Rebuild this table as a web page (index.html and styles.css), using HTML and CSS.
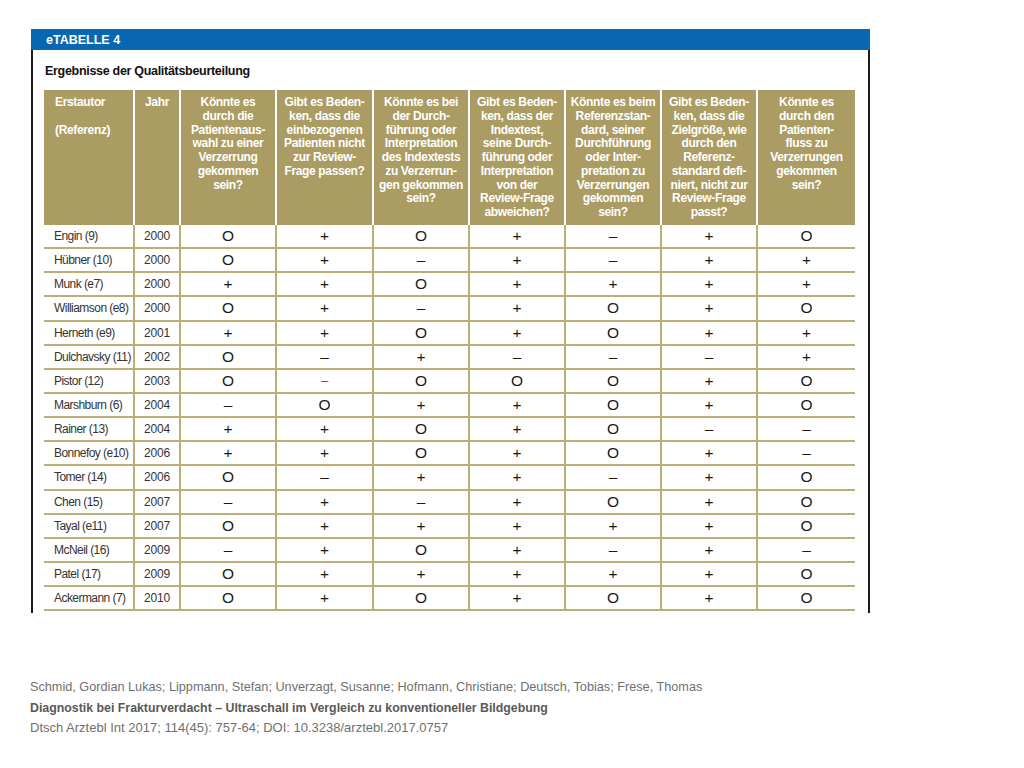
FILE: index.html
```html
<!DOCTYPE html>
<html lang="de">
<head>
<meta charset="utf-8">
<title>eTABELLE 4</title>
<link rel="stylesheet" href="styles.css">
</head>
<body>
<div class="page">
  <div class="frame">
    <div class="titlebar">eTABELLE 4</div>
    <div class="panel">
      <div class="heading">Ergebnisse der Qualitätsbeurteilung</div>
      <table class="qtable">
        <colgroup>
          <col class="c-author"><col class="c-year"><col class="c-q"><col class="c-q2"><col class="c-q"><col class="c-q"><col class="c-q"><col class="c-q"><col class="c-q2">
        </colgroup>
        <thead>
          <tr>
            <th class="h-author">Erstautor<br><br>(Referenz)</th>
            <th>Jahr</th>
            <th>Könnte es<br>durch die<br>Patientenaus-<br>wahl zu einer<br>Verzerrung<br>gekommen<br>sein?</th>
            <th>Gibt es Beden-<br>ken, dass die<br>einbezogenen<br>Patienten nicht<br>zur Review-<br>Frage passen?</th>
            <th>Könnte es bei<br>der Durch-<br>führung oder<br>Interpretation<br>des Indextests<br>zu Verzerrun-<br>gen gekommen<br>sein?</th>
            <th>Gibt es Beden-<br>ken, dass der<br>Indextest,<br>seine Durch-<br>führung oder<br>Interpretation<br>von der<br>Review-Frage<br>abweichen?</th>
            <th>Könnte es beim<br>Referenzstan-<br>dard, seiner<br>Durchführung<br>oder Inter-<br>pretation zu<br>Verzerrungen<br>gekommen<br>sein?</th>
            <th>Gibt es Beden-<br>ken, dass die<br>Zielgröße, wie<br>durch den<br>Referenz-<br>standard defi-<br>niert, nicht zur<br>Review-Frage<br>passt?</th>
            <th>Könnte es<br>durch den<br>Patienten-<br>fluss zu<br>Verzerrungen<br>gekommen<br>sein?</th>
          </tr>
        </thead>
        <tbody>
          <tr><td class="author">Engin (9)</td><td class="year">2000</td><td>O</td><td>+</td><td>O</td><td>+</td><td>–</td><td>+</td><td>O</td></tr>
          <tr><td class="author">Hübner (10)</td><td class="year">2000</td><td>O</td><td>+</td><td>–</td><td>+</td><td>–</td><td>+</td><td>+</td></tr>
          <tr><td class="author">Munk (e7)</td><td class="year">2000</td><td>+</td><td>+</td><td>O</td><td>+</td><td>+</td><td>+</td><td>+</td></tr>
          <tr><td class="author">Williamson (e8)</td><td class="year">2000</td><td>O</td><td>+</td><td>–</td><td>+</td><td>O</td><td>+</td><td>O</td></tr>
          <tr><td class="author">Herneth (e9)</td><td class="year">2001</td><td>+</td><td>+</td><td>O</td><td>+</td><td>O</td><td>+</td><td>+</td></tr>
          <tr><td class="author">Dulchavsky (11)</td><td class="year">2002</td><td>O</td><td>–</td><td>+</td><td>–</td><td>–</td><td>–</td><td>+</td></tr>
          <tr><td class="author">Pistor (12)</td><td class="year">2003</td><td>O</td><td class="thin">–</td><td>O</td><td>O</td><td>O</td><td>+</td><td>O</td></tr>
          <tr><td class="author">Marshburn (6)</td><td class="year">2004</td><td>–</td><td>O</td><td>+</td><td>+</td><td>O</td><td>+</td><td>O</td></tr>
          <tr><td class="author">Rainer (13)</td><td class="year">2004</td><td>+</td><td>+</td><td>O</td><td>+</td><td>O</td><td>–</td><td>–</td></tr>
          <tr><td class="author">Bonnefoy (e10)</td><td class="year">2006</td><td>+</td><td>+</td><td>O</td><td>+</td><td>O</td><td>+</td><td>–</td></tr>
          <tr><td class="author">Tomer (14)</td><td class="year">2006</td><td>O</td><td>–</td><td>+</td><td>+</td><td>–</td><td>+</td><td>O</td></tr>
          <tr><td class="author">Chen (15)</td><td class="year">2007</td><td>–</td><td>+</td><td>–</td><td>+</td><td>O</td><td>+</td><td>O</td></tr>
          <tr><td class="author">Tayal (e11)</td><td class="year">2007</td><td>O</td><td>+</td><td>+</td><td>+</td><td>+</td><td>+</td><td>O</td></tr>
          <tr><td class="author">McNeil (16)</td><td class="year">2009</td><td>–</td><td>+</td><td>O</td><td>+</td><td>–</td><td>+</td><td>–</td></tr>
          <tr><td class="author">Patel (17)</td><td class="year">2009</td><td>O</td><td>+</td><td>+</td><td>+</td><td>+</td><td>+</td><td>O</td></tr>
          <tr><td class="author">Ackermann (7)</td><td class="year">2010</td><td>O</td><td>+</td><td>O</td><td>+</td><td>O</td><td>+</td><td>O</td></tr>
        </tbody>
      </table>
    </div>
  </div>
  <div class="footer">
    <p class="authors">Schmid, Gordian Lukas; Lippmann, Stefan; Unverzagt, Susanne; Hofmann, Christiane; Deutsch, Tobias; Frese, Thomas</p>
    <p class="title">Diagnostik bei Frakturverdacht – Ultraschall im Vergleich zu konventioneller Bildgebung</p>
    <p class="cite">Dtsch Arztebl Int 2017; 114(45): 757-64; DOI: 10.3238/arztebl.2017.0757</p>
  </div>
</div>
</body>
</html>
```

FILE: styles.css
```css
* { box-sizing: border-box; }

html, body {
  margin: 0;
  padding: 0;
  background: #ffffff;
}

body {
  font-family: "Liberation Sans", Arial, sans-serif;
}

.page {
  padding-top: 29px;
}

.frame {
  margin-left: 31px;
  width: 839px;
}

.titlebar {
  height: 21px;
  background: #0966b0;
  color: #ffffff;
  font-weight: bold;
  font-size: 12.5px;
  line-height: 22px;
  padding-left: 15px;
}

.panel {
  border-left: 2px solid #1b1b1b;
  border-right: 2px solid #1b1b1b;
  padding: 0 0 2px 11px;
}

.heading {
  height: 40px;
  display: flex;
  align-items: center;
  padding: 1px 0 0 1px;
  font-weight: bold;
  font-size: 12.5px;
  letter-spacing: -0.3px;
  color: #111111;
}

.qtable {
  border-collapse: separate;
  border-spacing: 0;
  table-layout: fixed;
  width: 811px;
}

.c-author { width: 91px; }
.c-year { width: 46px; }
.c-q { width: 96px; }
.c-q2 { width: 97px; }

.qtable th {
  height: 135px;
  background: #aa9c62;
  color: #ffffff;
  font-weight: bold;
  font-size: 12px;
  letter-spacing: -0.35px;
  line-height: 13.75px;
  text-align: center;
  vertical-align: top;
  white-space: nowrap;
  padding: 6px 0 0;
  border-right: 2px solid #ffffff;
}

.qtable th:last-child { border-right: none; }

.qtable th.h-author {
  text-align: left;
  padding-left: 11px;
}

.qtable tbody tr { height: 24.15px; }

.qtable td {
  padding: 0;
  border-bottom: 2px solid #bcae78;
  border-right: 2px solid #bcae78;
  text-align: center;
  vertical-align: middle;
  font-size: 15.5px;
  line-height: 18px;
  color: #1a1a1a;
}

.qtable td:last-child { border-right: none; }

.qtable td.author {
  text-align: left;
  padding-left: 10px;
  font-size: 12px;
  letter-spacing: -0.55px;
  color: #333333;
  white-space: nowrap;
}

.qtable td.year {
  font-size: 12px;
  letter-spacing: -0.2px;
  color: #333333;
}

.qtable td.thin {
  color: #555555;
  font-size: 13px;
}

.footer {
  margin-top: 64px;
  margin-left: 30px;
  font-size: 12.7px;
  line-height: 20.5px;
  color: #707070;
}

.footer p { margin: 0; }

.footer .title {
  font-weight: bold;
  font-size: 12.35px;
  color: #595959;
}

.footer .cite {
  font-size: 13px;
}
```
